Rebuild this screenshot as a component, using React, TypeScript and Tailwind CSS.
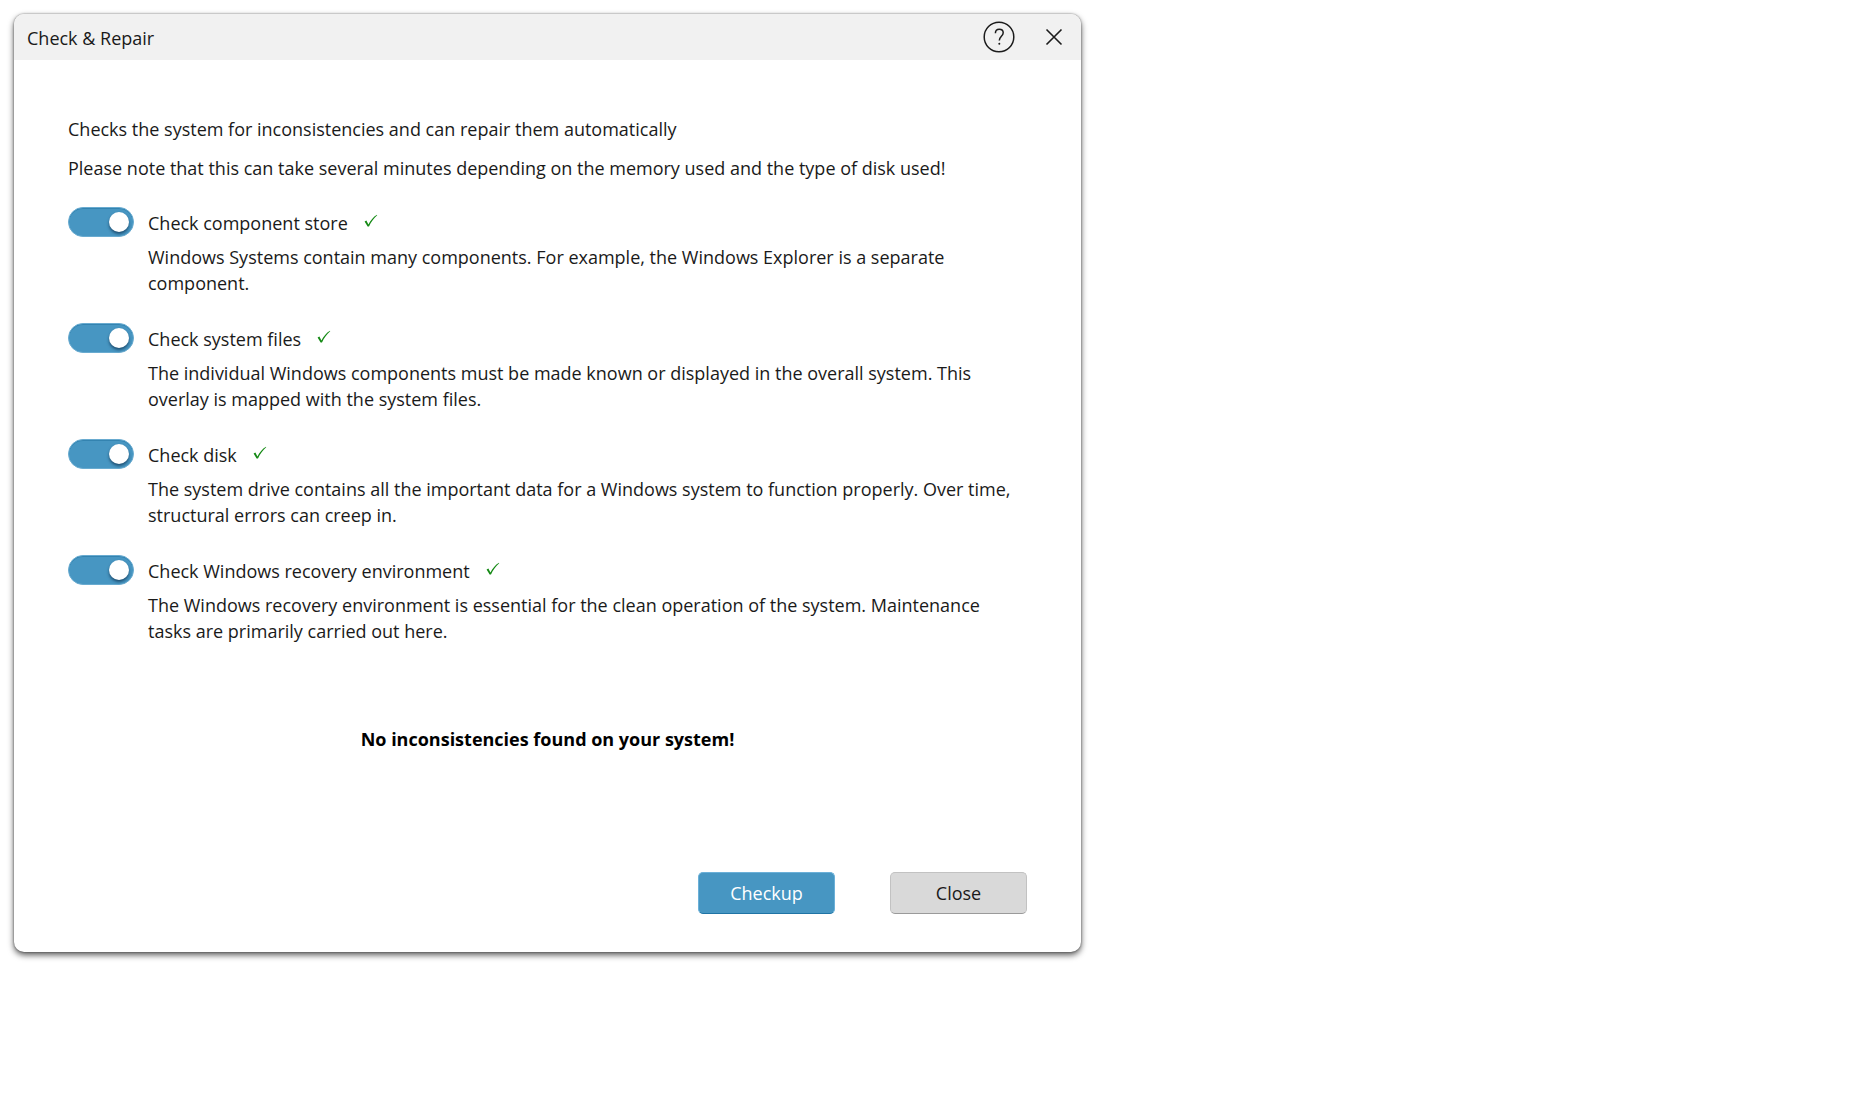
import { useState } from 'react';

const checks = [
  {
    id: 'component-store',
    label: 'Check component store',
    text: 'Windows Systems contain many components. For example, the Windows Explorer is a separate component.',
  },
  {
    id: 'system-files',
    label: 'Check system files',
    text: 'The individual Windows components must be made known or displayed in the overall system. This overlay is mapped with the system files.',
  },
  {
    id: 'disk',
    label: 'Check disk',
    text: 'The system drive contains all the important data for a Windows system to function properly. Over time, structural errors can creep in.',
  },
  {
    id: 'recovery',
    label: 'Check Windows recovery environment',
    text: 'The Windows recovery environment is essential for the clean operation of the system. Maintenance tasks are primarily carried out here.',
  },
];

function HelpIcon() {
  return (
    <svg width="32" height="32" viewBox="0 0 32 32" fill="none" stroke="#1c1c1c" strokeWidth="1.5" aria-hidden="true">
      <circle cx="16" cy="16" r="14.8" />
      <path d="M12.4 12.200C12.400 9.600 13.900 8.200 16.300 8.200S20.200 9.700 20.200 11.800C20.200 15.200 16.300 15.600 16.300 19.600" />
      <circle cx="16.300" cy="22.800" r="1" fill="#1c1c1c" stroke="none" />
    </svg>
  );
}

function CloseIcon() {
  return (
    <svg width="18" height="18" viewBox="0 0 18 18" fill="none" stroke="#1c1c1c" strokeWidth="1.6" aria-hidden="true">
      <path d="M1.500 1.500l15 15M16.500 1.500l-15 15" />
    </svg>
  );
}

function CheckIcon() {
  return (
    <svg width="14" height="14" viewBox="0 0 14 14" className="mb-0.5" aria-hidden="true">
      <path d="M.6 7.600L2.400 6.600 4.400 10.400C6.600 6.400 9.200 3 13 .8l.2.400C9.600 4.300 7 8 5 12.600H3.600Z" fill="#158a15" />
    </svg>
  );
}

function Toggle({ id }: { id: string }) {
  const [on, setOn] = useState(true);
  return (
    <input
      id={id}
      type="checkbox"
      role="switch"
      checked={on}
      onChange={() => setOn(!on)}
      className="h-[30px] w-[66px] shrink-0 cursor-pointer appearance-none rounded-full border border-[#69abd0] bg-[#4796c2] px-1 py-1 shadow-[inset_0_1px_0_#3383b0] before:block before:size-5 before:rounded-full before:bg-white before:shadow-[0_2px_3px_rgba(0,30,60,0.6)] checked:before:ml-auto"
    />
  );
}

export default function App() {
  return (
    <main className="p-3.5 font-['Open_Sans','Noto_Sans',sans-serif] text-[18px] leading-[26px] text-[#1a1a1a]">
      <section
        aria-labelledby="dialog-title"
        className="max-w-[1067px] overflow-hidden rounded-[10px] bg-white shadow-[0_0_2px_rgba(0,0,0,0.5),0_3px_6px_rgba(0,0,0,0.65)]"
      >
        <header className="flex h-[46px] items-center bg-[#f1f1f1] pr-[18px] pl-[13px]">
          <h1 id="dialog-title" className="grow pt-0.5">Check &amp; Repair</h1>
          <button type="button" aria-label="Help" className="mr-[30px]">
            <HelpIcon />
          </button>
          <button type="button" aria-label="Close dialog">
            <CloseIcon />
          </button>
        </header>

        <div className="px-[54px] pt-14 pb-[38px]">
          <p>Checks the system for inconsistencies and can repair them automatically</p>
          <p className="mt-[13px]">
            Please note that this can take several minutes depending on the memory used and the type of disk used!
          </p>

          <ul className="mt-[26px] flex flex-col gap-[27px]">
            {checks.map((check) => (
              <li key={check.id}>
                <div className="flex h-[30px] items-center">
                  <Toggle id={check.id} />
                  <label htmlFor={check.id} className="mr-4 ml-3.5 pt-px">
                    {check.label}
                  </label>
                  <CheckIcon />
                </div>
                <p className="mt-[7px] ml-20">{check.text}</p>
              </li>
            ))}
          </ul>

          <p className="mt-[82px] text-center font-bold text-black">No inconsistencies found on your system!</p>

          <div className="mt-[120px] flex justify-end gap-[55px]">
            <button
              type="button"
              className="h-[42px] w-[137px] rounded-[5px] border border-[#6bb0d8] border-b-[#1f74a5] bg-[#4796c2] text-white"
            >
              Checkup
            </button>
            <button
              type="button"
              className="h-[42px] w-[137px] rounded-[5px] border border-[#c2c2c2] border-b-[#9a9a9a] bg-[#d9d9d9]"
            >
              Close
            </button>
          </div>
        </div>
      </section>
    </main>
  );
}
